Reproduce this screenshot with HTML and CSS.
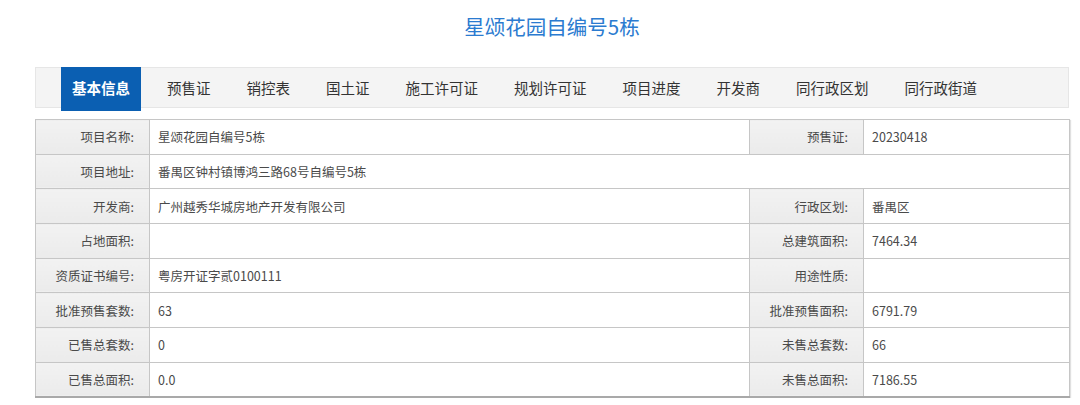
FILE: index.html
```html
<!DOCTYPE html>
<html lang="zh-CN">
<head>
<meta charset="utf-8">
<title>星颂花园自编号5栋</title>
<link rel="stylesheet" href="styles.css">
</head>
<body>
<div class="page">
  <h1 class="title">星颂花园自编号5栋</h1>
  <nav class="tabs">
    <a class="tab active">基本信息</a>
    <a class="tab">预售证</a>
    <a class="tab">销控表</a>
    <a class="tab">国土证</a>
    <a class="tab">施工许可证</a>
    <a class="tab">规划许可证</a>
    <a class="tab">项目进度</a>
    <a class="tab">开发商</a>
    <a class="tab">同行政区划</a>
    <a class="tab">同行政街道</a>
  </nav>
  <table class="info">
    <colgroup>
      <col class="c-label"><col class="c-value"><col class="c-label"><col class="c-value2">
    </colgroup>
    <tr><th>项目名称:</th><td>星颂花园自编号5栋</td><th>预售证:</th><td>20230418</td></tr>
    <tr><th>项目地址:</th><td colspan="3">番禺区钟村镇博鸿三路68号自编号5栋</td></tr>
    <tr><th>开发商:</th><td>广州越秀华城房地产开发有限公司</td><th>行政区划:</th><td>番禺区</td></tr>
    <tr><th>占地面积:</th><td></td><th>总建筑面积:</th><td>7464.34</td></tr>
    <tr><th>资质证书编号:</th><td>粤房开证字贰0100111</td><th>用途性质:</th><td></td></tr>
    <tr><th>批准预售套数:</th><td>63</td><th>批准预售面积:</th><td>6791.79</td></tr>
    <tr><th>已售总套数:</th><td>0</td><th>未售总套数:</th><td>66</td></tr>
    <tr><th>已售总面积:</th><td>0.0</td><th>未售总面积:</th><td>7186.55</td></tr>
  </table>
</div>
</body>
</html>
```
FILE: styles.css
```css
html, body {
  margin: 0;
  padding: 0;
  background: #ffffff;
}
body {
  font-family: "Noto Sans CJK SC", "Microsoft YaHei", sans-serif;
  color: #444;
}
.page {
  margin-left: 35px;
  width: 1034px;
}
.title {
  margin: 11px 0 0;
  height: 30px;
  line-height: 30px;
  text-align: center;
  font-size: 20.5px;
  font-weight: normal;
  color: #2b7bd0;
}
.tabs {
  margin-top: 26px;
  height: 39px;
  background: #f4f4f4;
  border: 1px solid #e6e6e6;
  display: flex;
  align-items: flex-start;
  padding-left: 25px;
}
.tab {
  display: block;
  line-height: 39px;
  padding: 0 18px;
  font-size: 14.5px;
  color: #333;
  white-space: nowrap;
}
.tab.active {
  margin-top: -1px;
  height: 44px;
  line-height: 42px;
  padding: 0 11px;
  margin-right: 8px;
  background: #0b5fb2;
  color: #fff;
  font-weight: bold;
}
.info {
  margin-top: 11px;
  width: 1034px;
  border-collapse: collapse;
  table-layout: fixed;
  border: 1px solid #a9a9a9;
  border-bottom: 2px solid #a9a9a9;
  box-shadow: 1px 1px 1px rgba(0,0,0,0.12);
  font-size: 12.5px;
}
.c-label { width: 114px; }
.c-value { width: 600px; }
.c-value2 { width: 206px; }
.info tr { height: 34.7px; }
.info th, .info td {
  border: 1px solid #c6c6c6;
  padding: 0;
  color: #4a4a4a;
  font-weight: normal;
}
.info tr + tr th, .info tr + tr td {
  border-top-color: #b4b4b4;
}
.info th {
  background: linear-gradient(#f2f2f2, #ebebeb);
  text-align: right;
  padding-right: 15px;
}
.info td {
  background: #fff;
  text-align: left;
  padding-left: 8px;
}
```
